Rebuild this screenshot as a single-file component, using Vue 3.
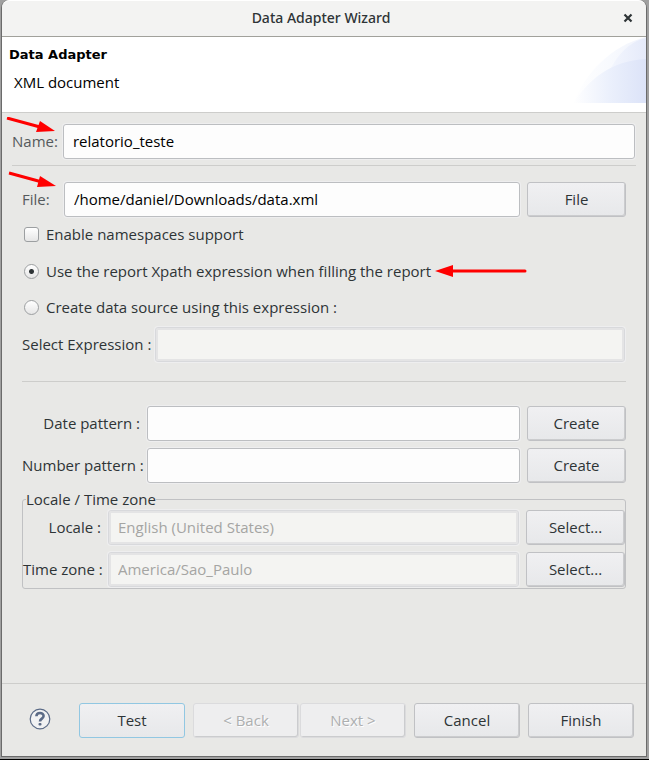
<script setup>
import { ref } from 'vue'

const name = ref('relatorio_teste')
const file = ref('/home/daniel/Downloads/data.xml')
const namespaces = ref(false)
const mode = ref('report')
const expression = ref('')
const patterns = ref([
  { id: 'date', label: 'Date pattern :', value: '' },
  { id: 'number', label: 'Number pattern :', value: '' }
])
const regions = ref([
  { id: 'locale', label: 'Locale :', value: 'English (United States)' },
  { id: 'zone', label: 'Time zone :', value: 'America/Sao_Paulo' }
])
</script>

<template>
  <div class="desktop">
    <main class="dialog">
      <header class="titlebar">
        <h1>Data Adapter Wizard</h1>
        <button class="close" type="button" aria-label="Close">
          <svg width="10" height="10" viewBox="0 0 10 10"><path d="M1.5 1.5 8.5 8.5M8.5 1.5 1.5 8.5" stroke="#2e3436" stroke-width="2.2" /></svg>
        </button>
      </header>

      <section class="banner">
        <div class="heading">
          <h2>Data Adapter</h2>
          <p>XML document</p>
        </div>
        <svg class="swoosh" width="76" height="66" viewBox="0 0 76 66">
          <defs>
            <linearGradient id="outer"><stop offset="0" stop-color="#fff" /><stop offset="0.5" stop-color="#f8fafe" /><stop offset="1" stop-color="#f0f3fc" /></linearGradient>
            <linearGradient id="middle"><stop offset="0" stop-color="#f4f7fe" /><stop offset="1" stop-color="#e5eafa" /></linearGradient>
            <linearGradient id="inner"><stop offset="0" stop-color="#fff" /><stop offset="0.5" stop-color="#ebf0fc" /><stop offset="1" stop-color="#dce3f8" /></linearGradient>
          </defs>
          <path d="M3 66C16 36 40 9 76 0V66Z" fill="url(#outer)" />
          <path d="M37 40C44 22 57 5 76 1V40Z" fill="url(#middle)" />
          <path d="M3 66C20 42 40 24 76 22V66Z" fill="url(#inner)" />
        </svg>
      </section>

      <section class="name-row">
        <label for="name">Name:</label>
        <input id="name" v-model="name" class="field" type="text" />
        <svg class="arrow" width="50" height="18" viewBox="0 0 50 18">
          <path d="M1 1 34 10" stroke="red" stroke-width="3" />
          <path d="M34 4 49 14 30 15Z" fill="red" />
        </svg>
      </section>

      <form class="body" @submit.prevent>
        <div class="row file-row">
          <label for="file">File:</label>
          <input id="file" v-model="file" class="field" type="text" />
          <button class="btn" type="button">File</button>
          <svg class="arrow" width="50" height="18" viewBox="0 0 50 18">
            <path d="M1 2 34 11" stroke="red" stroke-width="3" />
            <path d="M32 5 48 15 29 16Z" fill="red" />
          </svg>
        </div>

        <div class="options">
          <label class="option"><input v-model="namespaces" type="checkbox" />Enable namespaces support</label>
          <label class="option">
            <input v-model="mode" type="radio" name="mode" value="report" />Use the report Xpath expression when filling the report
            <svg class="pointer" width="92" height="14" viewBox="0 0 92 14">
              <path d="M16 7H90" stroke="red" stroke-width="3" stroke-linecap="round" />
              <path d="M0 7 18 1V13Z" fill="red" />
            </svg>
          </label>
          <label class="option"><input v-model="mode" type="radio" name="mode" value="custom" />Create data source using this expression :</label>
        </div>

        <div class="row expression-row">
          <label for="expression">Select Expression :</label>
          <input id="expression" v-model="expression" class="field" type="text" disabled />
        </div>

        <div class="patterns">
          <div v-for="p in patterns" :key="p.id" class="row">
            <label :for="p.id">{{ p.label }}</label>
            <input :id="p.id" v-model="p.value" class="field" type="text" />
            <button class="btn" type="button">Create</button>
          </div>
        </div>

        <fieldset>
          <legend>Locale / Time zone</legend>
          <div v-for="r in regions" :key="r.id" class="row">
            <label :for="r.id">{{ r.label }}</label>
            <input :id="r.id" v-model="r.value" class="field" type="text" disabled />
            <button class="btn" type="button">Select...</button>
          </div>
        </fieldset>
      </form>

      <footer>
        <button class="help" type="button" aria-label="Help">
          <svg width="22" height="22" viewBox="0 0 22 22" fill="none">
            <circle cx="11" cy="11" r="9.8" fill="#f1f2f3" stroke="#5b6b87" stroke-width="1.2" />
            <path d="M7.4 8.3C7.4 3.9 14.6 3.9 14.6 8.1 14.6 10.7 11 10.6 11 13.5" stroke="#5b6b87" stroke-width="2.6" />
            <rect x="9.5" y="15" width="3" height="2.6" rx="1" fill="#5b6b87" />
          </svg>
        </button>
        <button class="btn primary" type="button">Test</button>
        <div class="pair">
          <button class="btn" type="button" disabled>&lt; Back</button>
          <button class="btn" type="button" disabled>Next &gt;</button>
        </div>
        <button class="btn" type="button">Cancel</button>
        <button class="btn" type="button">Finish</button>
      </footer>
    </main>
  </div>
</template>

<style>
body {
  margin: 0;
}
</style>

<style scoped>
* {
  box-sizing: border-box;
}

.desktop {
  display: flex;
  min-height: 100vh;
  padding: 0 2px 2px 1px;
  background: #a0a0a0;
  border-bottom: 1px solid #000;
  font: 15px/20px "Open Sans", "Noto Sans", sans-serif;
  color: #2e3436;
}

.dialog {
  display: flex;
  flex: 1;
  flex-direction: column;
  min-width: 0;
  background: #e8e8e6;
  border: 1px solid #6b6b6b;
  border-top: 0;
  border-radius: 8px 8px 0 0;
}

.titlebar {
  display: grid;
  grid-template-columns: 36px 1fr 36px;
  align-items: center;
  height: 37px;
  padding-bottom: 2px;
  background: #f3f3f2;
  border-top: 1px solid #fff;
  border-bottom: 1px solid #a1a19b;
  border-radius: 8px 8px 0 0;
}

h1 {
  grid-column: 2;
  margin: 0;
  padding-right: 6px;
  font: 500 14px/20px "Noto Sans", sans-serif;
  text-align: center;
}

.close,
.help {
  display: grid;
  place-items: center;
  padding: 0;
  background: none;
  border: 0;
}

.banner {
  display: flex;
  justify-content: space-between;
  height: 76px;
  background: #fff;
  border-bottom: 1px solid #cdcdcb;
  color: #000;
}

.heading {
  padding: 8px 7px;
}

h2 {
  margin: 0;
  font: bold 13px/20px "DejaVu Sans", sans-serif;
}

p {
  margin: 7px 5px 0;
}

.name-row {
  position: relative;
  display: flex;
  align-items: center;
  gap: 5px;
  margin: 0 10px;
  padding: 11px 1px 6px 0;
  border-bottom: 1px solid #cdcdcb;
}

.name-row label,
.row label {
  padding-bottom: 2px;
  white-space: nowrap;
}

.name-row label,
.file-row label {
  color: #555a5c;
}

.field {
  flex: 1;
  min-width: 0;
  height: 35px;
  padding: 0 9px 2px;
  background: #fdfdfd;
  border: 1px solid #bcbec1;
  border-radius: 3px;
  box-shadow: 0 0 0 1px #eeeeef;
  color: #000;
  font: inherit;
}

.field:disabled {
  background: #f4f4f2;
  border-color: #d8d9dc;
  box-shadow: inset 0 0 0 2px #e4e4e5, 0 0 0 1px #eeeeef;
  color: #a5a5a3;
}

.body {
  padding: 16px 20px 80px;
}

.row {
  position: relative;
  display: flex;
  align-items: center;
  gap: 7px;
}

.file-row label {
  width: 35px;
}

.arrow {
  position: absolute;
  top: 4px;
  left: -6px;
}

.file-row .arrow {
  top: -11px;
  left: -14px;
}

.btn {
  width: 99px;
  height: 35px;
  padding: 0 0 2px;
  background: linear-gradient(#f0f0f2, #e7e8ea);
  border: 1px solid #c0c1c4;
  border-radius: 3px;
  box-shadow: inset -1px -1px #cbccce;
  color: #2e3436;
  font: inherit;
}

.btn:disabled {
  background: #eeeeef;
  border-color: #dbdbdd;
  color: #adafb0;
  text-shadow: 1px 1px #fff;
}

.options {
  padding-top: 6px;
}

.option {
  position: relative;
  display: flex;
  align-items: center;
  width: fit-content;
  height: 36px;
  line-height: 20px;
}

.option:first-child {
  height: 22px;
  margin-bottom: 8px;
}

.option input {
  appearance: none;
  width: 15px;
  height: 15px;
  margin: 0 7px 0 2px;
  background: linear-gradient(#fff, #e6e6e6);
  border: 1px solid #9c9fa1;
  border-radius: 3px;
}

.option input[type='radio'] {
  border-radius: 50%;
}

.option input[type='radio']:checked {
  background: radial-gradient(circle, #2e3436 2px, transparent 3px), linear-gradient(#fff, #e6e6e6);
}

.pointer {
  position: absolute;
  top: 11px;
  left: calc(100% + 4px);
}

.expression-row {
  gap: 4px;
  padding: 2px 1px 19px 0;
  border-bottom: 1px solid #cdcdcb;
}

.patterns {
  display: grid;
  gap: 7px;
  padding-top: 24px;
}

.patterns label {
  width: 118px;
  text-align: right;
}

fieldset {
  display: grid;
  gap: 7px;
  min-width: 0;
  margin: 6px 0 0;
  padding: 1px 0 1px;
  border: 1px solid #c0c1c3;
  border-radius: 3px;
}

legend {
  margin-left: 3px;
  padding: 0;
  line-height: 20px;
}

fieldset label {
  width: 78px;
  text-align: right;
}

footer {
  display: flex;
  align-items: center;
  gap: 8px;
  margin-top: auto;
  padding: 19px 12px 18px 27px;
  border-top: 1px solid #cdcdcb;
}

.help {
  width: 22px;
  margin-right: auto;
  padding-bottom: 3px;
}

footer .btn {
  width: 106px;
}

.pair {
  display: flex;
  gap: 1px;
}

.btn.primary {
  border-color: #91c7e2;
  box-shadow: none;
}
</style>
